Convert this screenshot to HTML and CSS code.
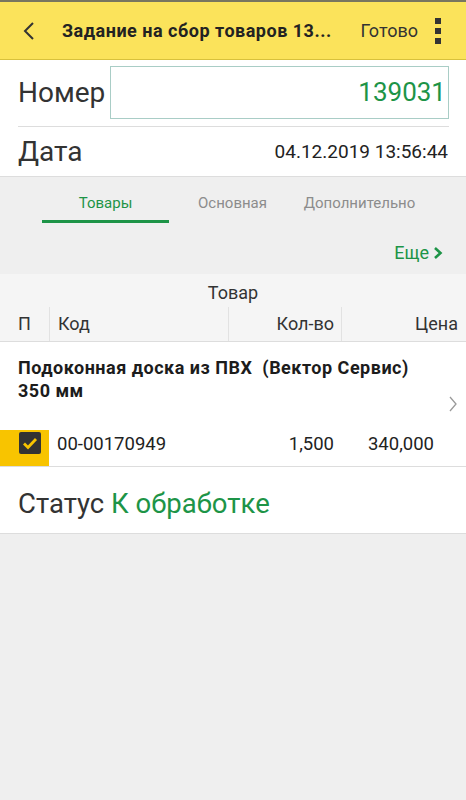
FILE: index.html
```html
<!DOCTYPE html>
<html lang="ru">
<head>
<meta charset="utf-8">
<title>Задание на сбор товаров</title>
<link rel="stylesheet" href="styles.css">
</head>
<body>
<div class="topline"></div>
<header class="header">
  <div class="back">
    <svg width="14" height="20" viewBox="0 0 14 20"><path d="M11 2 L3 10 L11 18" fill="none" stroke="#333" stroke-width="2"/></svg>
  </div>
  <div class="title">Задание на сбор товаров 13...</div>
  <div class="done">Готово</div>
  <div class="kebab"><span></span><span></span><span></span></div>
</header>

<section class="form">
  <div class="row row-number">
    <div class="label">Номер</div>
    <div class="input">139031</div>
  </div>
  <div class="row row-date">
    <div class="label">Дата</div>
    <div class="date">04.12.2019 13:56:44</div>
  </div>
</section>

<section class="tabsarea">
  <div class="tabs">
    <div class="tab active">Товары</div>
    <div class="tab">Основная</div>
    <div class="tab">Дополнительно</div>
  </div>
  <div class="more">Еще
    <svg width="10" height="14" viewBox="0 0 10 14"><path d="M2 2 L7.5 7 L2 12" fill="none" stroke="#1d9447" stroke-width="2.6"/></svg>
  </div>
</section>

<section class="table">
  <div class="thead">
    <div class="thead-top">Товар</div>
    <div class="thead-cols">
      <div class="c c-p">П</div>
      <div class="c c-code">Код</div>
      <div class="c c-qty">Кол-во</div>
      <div class="c c-price">Цена</div>
    </div>
  </div>
  <div class="item">
    <div class="item-name">Подоконная доска из ПВХ&nbsp; (Вектор Сервис)<br>350 мм</div>
    <div class="item-cols">
      <div class="d d-p"><span class="check"><svg width="16" height="13" viewBox="0 0 16 13"><path d="M2 6.5 L6 10.5 L14 2" fill="none" stroke="#f8c400" stroke-width="2.8"/></svg></span></div>
      <div class="d d-code">00-00170949</div>
      <div class="d d-qty">1,500</div>
      <div class="d d-price">340,000</div>
    </div>
    <svg class="chev" width="10" height="18" viewBox="0 0 10 18"><path d="M2 2 L8 9 L2 16" fill="none" stroke="#9a9a9a" stroke-width="1.3"/></svg>
  </div>
</section>

<section class="status">
  <span class="status-label">Статус</span> <span class="status-value">К обработке</span>
</section>
</body>
</html>
```
FILE: styles.css
```css
* { box-sizing: border-box; }
html, body { margin: 0; padding: 0; }
body {
  background: #efefef;
  font-family: Roboto, "Noto Sans", "Liberation Sans", sans-serif;
  color: #333;
  width: 466px;
}
.topline { height: 2px; background: #78765f; }
.header {
  height: 58px;
  background: #fbe35b;
  border-bottom: 1px solid #d8c13c;
  display: flex;
  align-items: center;
}
.back { width: 62px; padding-left: 22px; display: flex; align-items: center; }
.title {
  flex: 1;
  font-weight: 700;
  font-size: 18px;
  letter-spacing: 0.5px;
  color: #222;
  white-space: nowrap;
}
.done { font-size: 18px; color: #333; margin-right: 17px; }
.kebab {
  display: flex;
  flex-direction: column;
  gap: 4px;
  margin-right: 25px;
}
.kebab span { width: 6px; height: 6px; background: #333; display: block; }

.form { background: #fff; }
.row { display: flex; align-items: center; }
.label { font-size: 28px; color: #333; }
.row-number {
  height: 67px;
  margin: 0 17px 0 18px;
  border-bottom: 1px solid #ddd;
  padding-bottom: 2px;
}
.row-number .label { width: 92px; }
.input {
  flex: 1;
  height: 53px;
  border: 1px solid #a9cdc6;
  text-align: right;
  font-size: 26px;
  color: #1d9447;
  line-height: 51px;
  padding-right: 2px;
}
.row-date {
  height: 50px;
  padding: 0 18px;
  justify-content: space-between;
  border-bottom: 1px solid #ddd;
}
.date { font-size: 19px; color: #222; }

.tabsarea { height: 97px; background: #efefef; }
.tabs { display: flex; padding: 16px 0 0 42px; }
.tab {
  width: 127px;
  text-align: center;
  font-size: 15px;
  color: #8c8c8c;
  line-height: 20px;
  padding-bottom: 7px;
  border-bottom: 3px solid transparent;
}
.tab.active { color: #1d9447; border-bottom-color: #1d9447; }
.more {
  display: flex;
  justify-content: flex-end;
  align-items: center;
  gap: 4px;
  padding-right: 23px;
  margin-top: 19px;
  font-size: 18px;
  color: #1d9447;
}

.thead { background: #f5f5f5; border-bottom: 1px solid #ddd; }
.thead-top { text-align: center; font-size: 18px; height: 33px; line-height: 38px; color: #333; }
.thead-cols {
  display: grid;
  grid-template-columns: 49px 179px 113px 125px;
  height: 34px;
}
.c { font-size: 18px; line-height: 34px; color: #333; }
.c-p { padding-left: 18px; }
.c-code { border-left: 1px solid #e2e2e2; padding-left: 8px; }
.c-qty { border-left: 1px solid #e2e2e2; text-align: right; padding-right: 7px; }
.c-price { border-left: 1px solid #e2e2e2; text-align: right; padding-right: 8px; }

.item { position: relative; background: #fff; border-bottom: 1px solid #ddd; }
.item-name {
  font-weight: 700;
  font-size: 18px;
  letter-spacing: 0.5px;
  line-height: 23px;
  color: #1c1c1c;
  padding: 14px 18px 0 18px;
  height: 88px;
}
.item-cols {
  display: grid;
  grid-template-columns: 49px 179px 113px 125px;
  height: 36px;
}
.d { font-size: 18.5px; line-height: 28px; padding-top: 0; color: #222; }
.d-p {
  background: #f8c400;
  display: flex;
  align-items: flex-start;
  justify-content: flex-end;
  padding: 2px 8px 0 0;
}
.check {
  width: 22px;
  height: 22px;
  background: #333;
  border-radius: 2px;
  display: flex;
  align-items: center;
  justify-content: center;
}
.d-code { padding-left: 8px; }
.d-qty { text-align: right; padding-right: 7px; }
.d-price { text-align: right; padding-right: 32px; }
.chev { position: absolute; right: 8px; top: 53px; }

.status {
  background: #fff;
  height: 67px;
  border-bottom: 1px solid #ddd;
  padding: 7px 18px 0;
  font-size: 27.5px;
  line-height: 60px;
}
.status-label { color: #333; }
.status-value { color: #1d9447; }
```
